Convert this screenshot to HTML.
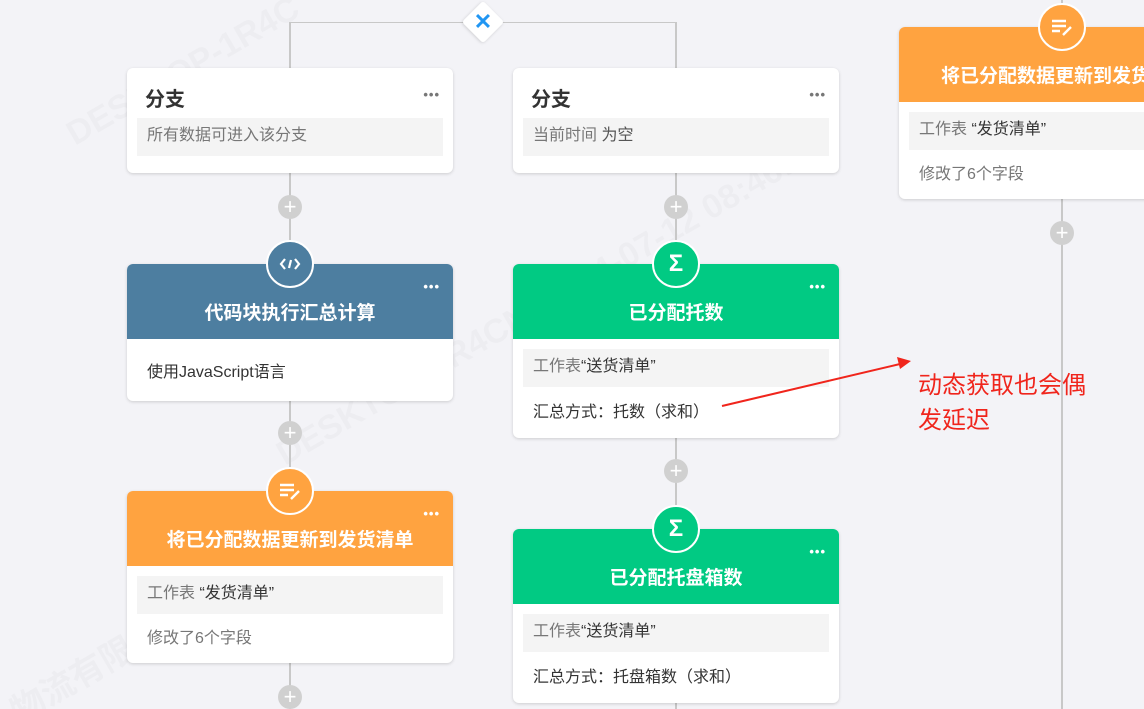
<!DOCTYPE html>
<html style="width:1144px;height:709px;overflow:hidden"><head><meta charset="utf-8"><style>
*{margin:0;padding:0;box-sizing:border-box}
html,body{width:1144px;height:709px;overflow:hidden}
body{background:#f3f3f7;position:relative;font-family:"Liberation Sans","Noto Sans CJK SC",sans-serif}
.ln{position:absolute;background:#c8c8c8}
.card{position:absolute;background:#fff;border-radius:6px;box-shadow:0 1px 3px rgba(0,0,0,.16);overflow:hidden}
.hd{height:75px;color:#fff;font-weight:bold;font-size:19px;text-align:center;line-height:100px}
.dots{position:absolute;right:13px;top:18px;font-size:13px;letter-spacing:1px;line-height:10px;font-weight:bold}
.gray{position:absolute;left:10px;right:10px;height:38px;background:#f4f4f4;font-size:16px;color:#777;line-height:36px;padding-left:10px}
.t{position:absolute;left:20px;font-size:16px;color:#333}
.plus{position:absolute;width:24px;height:24px;border-radius:50%;background:#d0d0d0;color:#fff;font-size:22px;line-height:23px;text-align:center}
.ic{position:absolute;width:48px;height:48px;border-radius:50%;border:2px solid #fff;display:flex;align-items:center;justify-content:center}
.wm{position:absolute;color:rgba(0,0,0,.025);font-size:34px;font-weight:bold;transform:rotate(-30deg);transform-origin:left top;white-space:nowrap}
</style></head><body>
<div class="wm" style="left:60px;top:120px">DESKTOP-1R4C</div>
<div class="wm" style="left:270px;top:440px">DESKTOP-1R4CN) 2024-07-12 08:46:2</div>
<div class="wm" style="left:0px;top:690px">物流有限公司</div>
<div class="ln" style="left:289px;top:22px;width:388px;height:1px"></div>
<div class="ln" style="left:289px;top:22px;width:2px;height:687px"></div>
<div class="ln" style="left:675px;top:22px;width:2px;height:687px"></div>
<div class="ln" style="left:1061px;top:0;width:2px;height:709px"></div>
<div style="position:absolute;left:468px;top:7px;width:30px;height:30px;background:#fff;transform:rotate(45deg);border-radius:3px;box-shadow:0 1px 3px rgba(0,0,0,.15)"></div>
<div style="position:absolute;left:473px;top:8px;width:20px;height:28px;color:#2196f3;font-size:22px;font-weight:bold;text-align:center;line-height:28px">✕</div>

<div class="card" style="left:127px;top:68px;width:326px;height:105px">
<div style="position:absolute;left:18px;top:15px;font-size:20px;font-weight:bold;color:#333">分支</div>
<div class="dots" style="color:#777;top:22px">•••</div>
<div class="gray" style="top:50px">所有数据可进入该分支</div></div>
<div class="card" style="left:513px;top:68px;width:326px;height:105px">
<div style="position:absolute;left:18px;top:15px;font-size:20px;font-weight:bold;color:#333">分支</div>
<div class="dots" style="color:#777;top:22px">•••</div>
<div class="gray" style="top:50px">当前时间 <span style="color:#555">为空</span></div></div>

<div class="card" style="left:127px;top:264px;width:326px;height:137px">
<div class="hd" style="background:#4d7ea0">代码块执行汇总计算</div><div class="dots" style="color:#fff">•••</div>
<div class="t" style="top:94px">使用JavaScript语言</div></div>
<div class="card" style="left:513px;top:264px;width:326px;height:174px">
<div class="hd" style="background:#01ca83">已分配托数</div><div class="dots" style="color:#fff">•••</div>
<div class="gray" style="top:85px">工作表<span style="color:#333">“送货清单”</span></div>
<div class="t" style="top:134px">汇总方式：托数（求和）</div></div>
<div class="card" style="left:127px;top:491px;width:326px;height:172px">
<div class="hd" style="background:#ffa340">将已分配数据更新到发货清单</div><div class="dots" style="color:#fff">•••</div>
<div class="gray" style="top:85px">工作表 <span style="color:#333">“发货清单”</span></div>
<div class="t" style="top:133px;color:#777">修改了6个字段</div></div>
<div class="card" style="left:513px;top:529px;width:326px;height:174px">
<div class="hd" style="background:#01ca83">已分配托盘箱数</div><div class="dots" style="color:#fff">•••</div>
<div class="gray" style="top:85px">工作表<span style="color:#333">“送货清单”</span></div>
<div class="t" style="top:134px">汇总方式：托盘箱数（求和）</div></div>
<div class="card" style="left:899px;top:27px;width:260px;height:172px">
<div class="hd" style="background:#ffa340;text-align:left;padding-left:42px">将已分配数据更新到发货清单</div>
<div class="gray" style="top:85px">工作表 <span style="color:#333">“发货清单”</span></div>
<div class="t" style="top:133px;color:#777">修改了6个字段</div></div>

<div class="plus" style="left:278px;top:195px">+</div>
<div class="plus" style="left:664px;top:195px">+</div>
<div class="plus" style="left:278px;top:421px">+</div>
<div class="plus" style="left:664px;top:459px">+</div>
<div class="plus" style="left:278px;top:685px">+</div>
<div class="plus" style="left:1050px;top:221px">+</div>

<div class="ic" style="left:266px;top:240px;background:#4d7ea0"><svg width="22" height="16" viewBox="0 0 22 16" fill="none" stroke="#fff" stroke-width="2.2"><path d="M6 3L2 8l4 5M16 3l4 5-4 5M12 4l-2 8"/></svg></div>
<div class="ic" style="left:652px;top:240px;background:#01ca83;color:#fff;font-size:24px;font-weight:bold">Σ</div>
<div class="ic" style="left:652px;top:505px;background:#01ca83;color:#fff;font-size:24px;font-weight:bold">Σ</div>
<div class="ic" style="left:266px;top:467px;background:#ffa340"><svg width="24" height="20" viewBox="0 0 24 20" fill="none" stroke="#fff" stroke-width="2.4"><path d="M2 4h14M2 9h14M2 14h8M13 18l8-8"/></svg></div>
<div class="ic" style="left:1038px;top:3px;background:#ffa340"><svg width="24" height="20" viewBox="0 0 24 20" fill="none" stroke="#fff" stroke-width="2.4"><path d="M2 4h14M2 9h14M2 14h8M13 18l8-8"/></svg></div>

<svg style="position:absolute;left:0;top:0" width="1144" height="709"><line x1="722" y1="406" x2="900" y2="364" stroke="#f0251c" stroke-width="2"/><path d="M911 361l-14-4 3 12z" fill="#f0251c"/></svg>
<div style="position:absolute;left:918px;top:368px;font-size:24px;line-height:35px;color:#f0251c">动态获取也会偶<br>发延迟</div>
</body></html>
